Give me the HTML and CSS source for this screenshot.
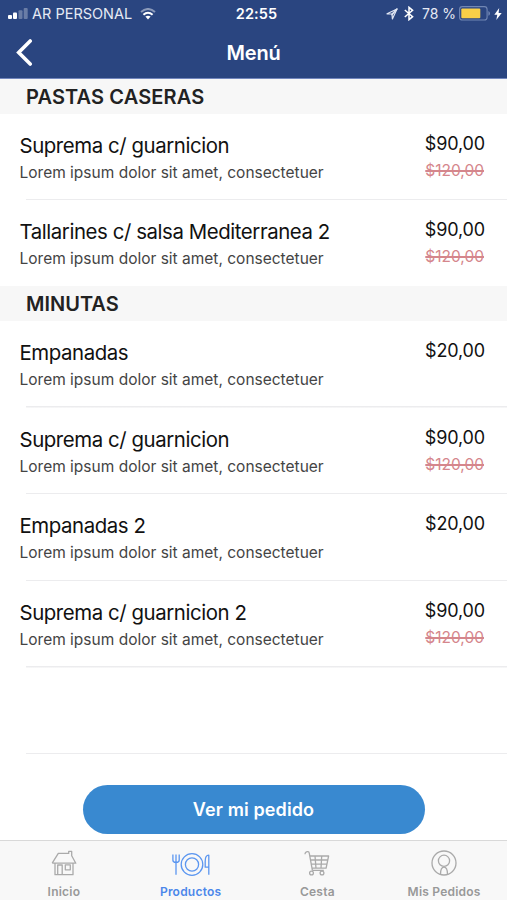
FILE: index.html
```html
<!DOCTYPE html>
<html lang="es">
<head>
<meta charset="utf-8">
<title>Menú</title>
<link rel="stylesheet" href="styles.css">
</head>
<body>
<div class="app">
  <header class="header">
    <div class="status">
      <div class="status-left">
        <svg class="signal" width="20" height="11" viewBox="0 0 20 11" fill="#fff"><rect x="0" y="7" width="4" height="4" rx="1"/><rect x="5" y="4.5" width="4" height="6.5" rx="1"/><rect x="10.5" y="2.2" width="4" height="8.8" rx="1" opacity=".3"/><rect x="15.7" y="0" width="4" height="11" rx="1" opacity=".3"/></svg>
        <span class="carrier">AR PERSONAL</span>
        <svg class="wifi" width="16" height="12" viewBox="0 0 16 12" fill="none" stroke="#fff" stroke-width="2"><path d="M1 4.1Q8-2.1 15 4.1" opacity=".45"/><path d="M3.4 6.8Q8 2.7 12.6 6.8"/><path d="M5.4 8.6Q8 6.7 10.6 8.6L8 11.5Z" fill="#fff" stroke="none"/></svg>
      </div>
      <span class="clock">22:55</span>
      <div class="status-right">
        <svg width="12" height="12" viewBox="0 0 12 12" fill="none" stroke="#dfe5f3" stroke-width="1.2" stroke-linejoin="round"><path d="M1 5.8 11 1 6.4 11 6 6Z"/><path d="M6 6 11 1 6 6.9Z" fill="#dfe5f3"/></svg>
        <svg class="bluetooth" width="10" height="15" viewBox="0 0 10 15" fill="none" stroke="#fff" stroke-width="1.5"><path d="M.8 4 8.6 10.7 5 13.7V1.3L8.6 4.3.8 11"/></svg>
        <span class="percent">78 %</span>
        <svg class="battery" width="32" height="15" viewBox="0 0 32 15"><rect x=".6" y=".6" width="27.5" height="13.4" rx="2.8" fill="none" stroke="#7187b4" stroke-width="1.1"/><rect x="2.3" y="2.4" width="19" height="9.8" rx="1" fill="#f8cf48"/><path d="M29.4 5v4.8q1.6-.7 1.6-2.4T29.4 5Z" fill="#7187b4"/></svg>
        <svg class="bolt" width="8" height="12" viewBox="0 0 8 12" fill="#fff"><path d="M5.2 0 .3 6.8h3L2.3 12 7.7 5H4.6Z"/></svg>
      </div>
    </div>
    <div class="nav">
      <svg class="back" width="17" height="27" viewBox="0 0 17 27" fill="none" stroke="#fff" stroke-width="3.6" stroke-linecap="round"><path d="M14.2 2 2.7 13.5 14.2 25"/></svg>
      <h1>Menú</h1>
    </div>
  </header>
  <main class="menu">
    <h2 class="section wide">PASTAS CASERAS</h2>
    <div class="item"><div><div class="name">Suprema c/ guarnicion</div><div class="desc">Lorem ipsum dolor sit amet, consectetuer</div></div><div class="prices"><div class="price">$90,00</div><s>$120,00</s></div></div>
    <div class="item last"><div><div class="name">Tallarines c/ salsa Mediterranea 2</div><div class="desc">Lorem ipsum dolor sit amet, consectetuer</div></div><div class="prices"><div class="price">$90,00</div><s>$120,00</s></div></div>
    <h2 class="section">MINUTAS</h2>
    <div class="item"><div><div class="name">Empanadas</div><div class="desc">Lorem ipsum dolor sit amet, consectetuer</div></div><div class="prices"><div class="price">$20,00</div></div></div>
    <div class="item"><div><div class="name">Suprema c/ guarnicion</div><div class="desc">Lorem ipsum dolor sit amet, consectetuer</div></div><div class="prices"><div class="price">$90,00</div><s>$120,00</s></div></div>
    <div class="item"><div><div class="name">Empanadas 2</div><div class="desc">Lorem ipsum dolor sit amet, consectetuer</div></div><div class="prices"><div class="price">$20,00</div></div></div>
    <div class="item"><div><div class="name">Suprema c/ guarnicion 2</div><div class="desc">Lorem ipsum dolor sit amet, consectetuer</div></div><div class="prices"><div class="price">$90,00</div><s>$120,00</s></div></div>
    <div class="item"></div>
  </main>
  <div class="action"><button>Ver mi pedido</button></div>
  <nav class="tabs">
    <div class="tab">
      <svg width="26" height="26" viewBox="0 0 26 26"><path d="M4 13v11.7h18V13M1.2 13.2 7.3 3.4h10.4v-2h3v4.4l4.1 7.4H1.2M6.7 24.5V15h4.5v9.5M14.3 14.8h5v5h-5z"/></svg>
      <span>Inicio</span>
    </div>
    <div class="tab active">
      <svg width="38" height="26" viewBox="0 0 38 26"><circle cx="20" cy="14.5" r="10.8"/><circle cx="20" cy="14.5" r="6.6"/><path d="M.9 4.5v5.8q0 2 3.1 2.3 3.2-.3 3.2-2.3V4.5M4 4.5v20.3M36.8 24.8V5.2c-2 0-3.6 2-3.6 6v6h3.6"/></svg>
      <span>Productos</span>
    </div>
    <div class="tab">
      <svg width="26" height="26" viewBox="0 0 26 26"><path d="M1 4.2Q1.2 1.4 4 1.7q1 .1 1.3 1.6L8.4 20.3M5.8 6h18.8l-2.5 12.2H7.8M6.6 10h17.2M7.3 14.1H23M11 6l1 12.2M17.7 6l-.7 12.2M8.4 20.3h11.4"/><circle cx="7.5" cy="23" r="1.9"/><circle cx="18" cy="23" r="1.9"/></svg>
      <span>Cesta</span>
    </div>
    <div class="tab">
      <svg width="26" height="26" viewBox="0 0 26 26"><circle cx="13" cy="13" r="12"/><circle cx="13" cy="10.8" r="5.6"/><path d="M9.5 24.3c0-4 1.2-7.2 3.5-7.2s3.5 3.2 3.5 7.2"/></svg>
      <span>Mis Pedidos</span>
    </div>
  </nav>
</div>
</body>
</html>
```
FILE: styles.css
```css
* { box-sizing: border-box; }
body { margin: 0; background: #fff; font-family: Inter, "Liberation Sans", sans-serif; color: #111; }
svg { display: block; flex: none; }
.app { width: 507px; height: 900px; display: flex; flex-direction: column; overflow: hidden; white-space: nowrap; }
.header { height: 79px; flex: none; background: #2a4580; border-bottom: 1px solid #7286bd; color: #fff; }
.status { height: 27px; display: grid; grid-template-columns: 1fr auto 1fr; align-items: center; padding: 0 5px 0 8px; font-size: 14.5px; line-height: 20px; }
.status-left, .status-right { display: flex; align-items: center; }
.status-right { justify-content: flex-end; }
.carrier { margin-left: 4px; color: #e6eaf4; }
.wifi { margin-left: 8px; }
.clock { padding-left: 3px; font-weight: 600; letter-spacing: .1px; }
.bluetooth { margin-left: 6px; }
.percent { margin-left: 8px; color: #e6eaf4; font-size: 14px; }
.battery { margin-left: 3px; }
.bolt { margin-left: 3px; }
.nav { height: 51px; display: grid; grid-template-columns: 1fr auto 1fr; align-items: center; padding: 0 16px; }
h1 { margin: 0; font-size: 20px; line-height: 24px; font-weight: 600; letter-spacing: -.2px; }
.menu { flex: none; height: 676px; }
.section { margin: 0; height: 34.5px; padding-left: 26px; background: #f7f7f7; font-size: 20px; line-height: 36px; font-weight: 600; color: #222; }
.section.wide { letter-spacing: .12px; }
.item { height: 86.7px; display: flex; justify-content: space-between; padding: 17px 22px 0 19.5px; background: linear-gradient(#ececee, #ececee) 26px 100% / 100% 1.5px no-repeat; }
.item.last { height: 86.3px; background: none; }
.name { font-size: 20.4px; line-height: 29px; letter-spacing: -.42px; }
.desc { font-size: 15.5px; line-height: 26.5px; color: #444; }
.prices { text-align: right; }
.price { font-size: 18px; line-height: 26px; letter-spacing: -.15px; }
.prices s { display: block; padding-right: 1px; font-size: 15.5px; line-height: 27px; color: #d5868c; text-decoration-thickness: 1.6px; }
.action { flex: 1; display: flex; justify-content: center; align-items: flex-start; padding-top: 30px; }
button { width: 342px; height: 49px; border: 0; border-radius: 25px; background: #3989d0; color: #fff; font: 600 18px/24px Inter, sans-serif; letter-spacing: .12px; }
.tabs { height: 60px; flex: none; display: grid; grid-template-columns: repeat(4, 1fr); background: #f8f8f8; border-top: 1px solid #d9d9d9; }
.tab { display: flex; flex-direction: column; align-items: center; padding: 9px 0 0 1px; color: #999; font-size: 12px; line-height: 16px; font-weight: 600; letter-spacing: .22px; }
.tab span { margin-top: 8px; }
.tab svg { fill: none; stroke: #aaa; stroke-width: 1.3; stroke-linejoin: round; }
.tab.active { color: #4b87ea; }
.tab.active svg { stroke: #5b96f0; }
```
